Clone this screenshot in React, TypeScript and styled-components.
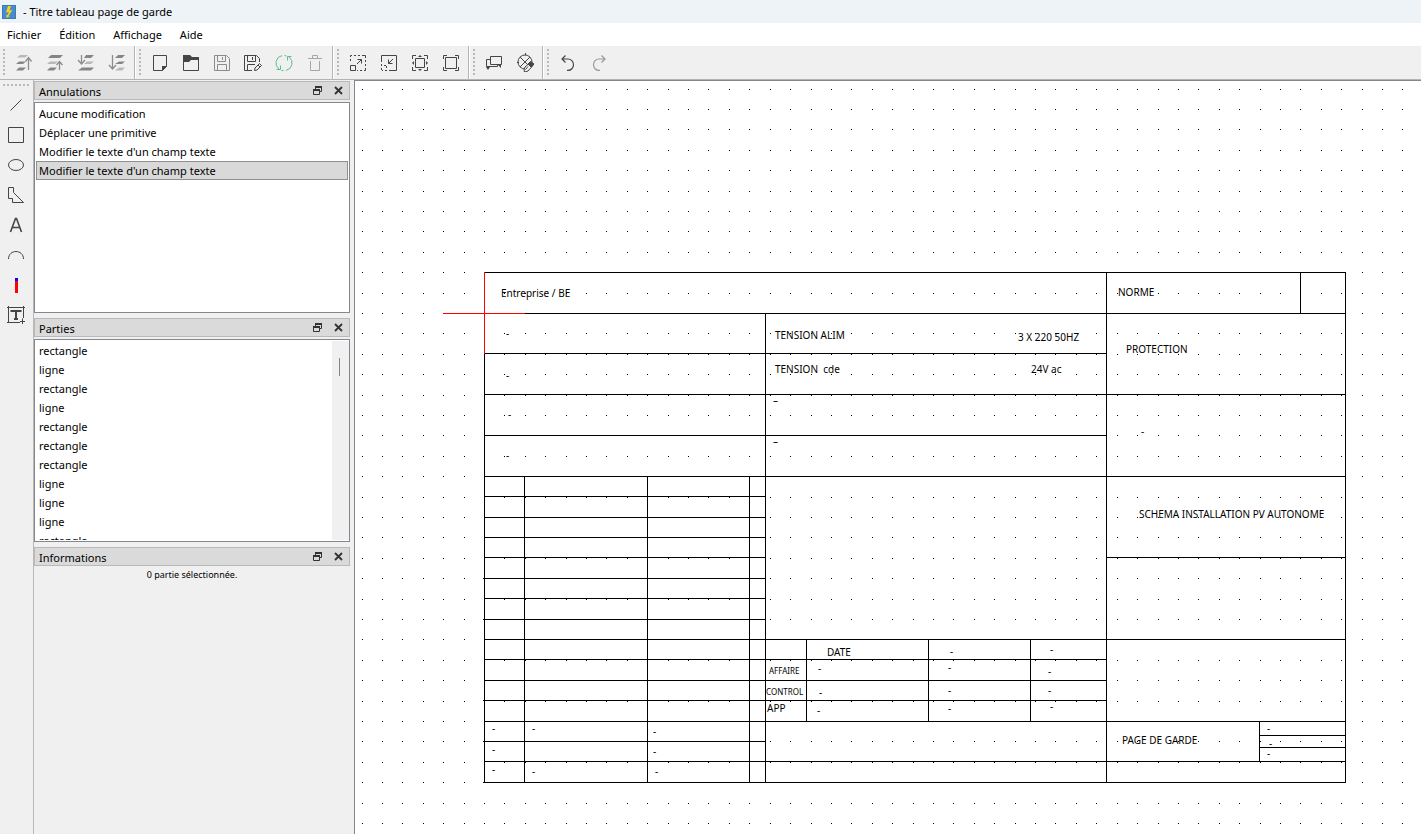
import React from 'react';
import styled, { createGlobalStyle, css } from 'styled-components';

const GlobalStyle = createGlobalStyle`
  *, *::before, *::after { box-sizing: border-box; }
  body {
    margin: 0;
    background: #f0f0f0;
    color: #000;
    font: 11px/19px "Noto Sans", "Open Sans", sans-serif;
  }
  button { font: inherit; color: inherit; }
`;

const Window = styled.div`
  display: flex;
  flex-direction: column;
  height: 100vh;
  overflow: hidden;
`;

const TitleBar = styled.header`
  display: flex;
  flex: none;
  align-items: center;
  gap: 7px;
  height: 23px;
  padding-left: 2px;
  background: #eef3f8;
`;

const WindowTitle = styled.h1`
  margin: 0;
  font-size: 11px;
  font-weight: 400;
`;

const MenuBar = styled.nav`
  display: flex;
  flex: none;
  gap: 18px;
  height: 23px;
  padding-left: 7px;
  background: #fff;
`;

const MenuButton = styled.button`
  padding: 0;
  border: 0;
  background: none;
`;

const ToolBar = styled.div`
  display: flex;
  flex: none;
  height: 34px;
  border-bottom: 1px solid #b4b4b4;
`;

const ToolGroup = styled.div<{ $last?: boolean }>`
  display: flex;
  align-items: center;
  padding-right: 2px;
  ${(p) => !p.$last && css`
    border-right: 1px solid #b4b4b4;
    margin-right: 1px;
    box-shadow: 1px 0 0 #fff;
  `}
`;

const Handle = styled.span<{ $vertical?: boolean }>`
  flex: none;
  ${(p) => p.$vertical
    ? css`
        width: 2px;
        height: 28px;
        margin: 0 3px;
        background: repeating-linear-gradient(#b9b9b9 0 2px, transparent 2px 4px);
      `
    : css`
        width: 27px;
        height: 2px;
        margin: 4px 0 4px 3px;
        background: repeating-linear-gradient(90deg, #b9b9b9 0 2px, transparent 2px 4px);
      `}
`;

const ToolButton = styled.button`
  display: flex;
  align-items: center;
  justify-content: center;
  width: 31px;
  height: 33px;
  padding: 0;
  border: 0;
  background: none;
`;

const Workspace = styled.div`
  display: flex;
  flex: 1;
  min-height: 0;
`;

const SideTools = styled.div`
  display: flex;
  flex: none;
  flex-direction: column;
  width: 34px;
  border-right: 1px solid #b8b8b8;
`;

const SideButton = styled.button`
  display: flex;
  align-items: center;
  justify-content: center;
  width: 32px;
  height: 30px;
  padding: 0;
  border: 0;
  background: none;
`;

const Docks = styled.aside`
  display: flex;
  flex: none;
  flex-direction: column;
  gap: 5px;
  width: 320px;
  padding: 1px 4px 0 0;
`;

const Dock = styled.section`
  display: flex;
  flex-direction: column;
  gap: 2px;
`;

const DockHeader = styled.div`
  display: flex;
  align-items: center;
  height: 19px;
  padding: 0 4px;
  border: 1px solid #b9b9b9;
  background: #dadada;
`;

const DockTitle = styled.h2`
  flex: 1;
  margin: 0;
  padding-top: 2px;
  font-size: 11px;
  font-weight: 400;
`;

const DockButton = styled.button`
  display: flex;
  align-items: center;
  justify-content: center;
  width: 21px;
  height: 17px;
  padding: 0;
  border: 0;
  background: none;
  &:last-child { width: 13px; margin-left: 4px; }
`;

const ListFrame = styled.div<{ $height: number }>`
  display: flex;
  height: ${(p) => p.$height}px;
  padding: 1px 0 1px 1px;
  overflow: hidden;
  border: 1px solid #828790;
  background: #fff;
`;

const List = styled.ul`
  flex: 1;
  margin: 0;
  padding: 0 1px 0 0;
  overflow: hidden;
  list-style: none;
`;

const ListItem = styled.li<{ $selected?: boolean }>`
  height: 19px;
  padding: 0 2px;
  line-height: 18px;
  border: 1px solid ${(p) => (p.$selected ? '#8f8f8f' : 'transparent')};
  background: ${(p) => (p.$selected ? '#d9d9d9' : 'none')};
`;

const ScrollTrack = styled.div`
  width: 17px;
  padding: 17px 0 0 7px;
  background: #f0f0f0;
`;

const ScrollThumb = styled.div`
  width: 1px;
  height: 18px;
  background: #858585;
`;

const InfoText = styled.p`
  margin: 0;
  font-size: 9px;
  line-height: 14px;
  text-align: center;
`;

const Canvas = styled.main`
  flex: 1;
  min-width: 0;
  overflow: hidden;
  border-top: 1px solid #828790;
  border-left: 1px solid #828790;
  background: #fff;
`;

const Drawing = styled.svg`
  display: block;
  width: 100%;
  height: 100%;
  font-family: "Noto Sans", sans-serif;
  text { white-space: pre; }
`;

const DARK = '#454545';
const MID = '#8c8c8c';

type IconProps = { size?: number; color?: string; children: React.ReactNode };

const Icon = ({ size = 19, color = DARK, children }: IconProps) => (
  <svg width={size} height={size} viewBox={`0 0 ${size} ${size}`} fill="none" stroke={color} aria-hidden="true">
    {children}
  </svg>
);

const floppy = 'M2.5 2.5H14.5L17.5 5.5V17.5H2.5Z M5.5 2.5V8.5H13.5V2.5 M10.5 4V7 M5.5 17.5V11.5H14.5V17.5';

type Tool = { label: string; icon: React.ReactNode };

const toolGroups: Tool[][] = [
  [
    {
      label: 'Amener au premier plan',
      icon: (
        <Icon color={MID}>
          <path d="M6 2H14L11 4.500H3Z" fill="#b8b8b8" stroke="none" />
          <path d="M5 8.500H12L9 11H2Z" fill="#858585" stroke="none" />
          <path d="M5 14.500H12L9 17.500H2Z" fill="#858585" stroke="none" />
          <path d="M14.500 17V5M11.500 8.500L14.500 4.500L17.500 8.500" strokeWidth="1.300" />
        </Icon>
      ),
    },
    {
      label: 'Rapprocher',
      icon: (
        <Icon color={MID}>
          <path d="M6 2H18L15 5H3Z" fill="#858585" stroke="none" />
          <path d="M5 8.500H13L10 11H2Z" fill="#b8b8b8" stroke="none" />
          <path d="M5 14.500H12L9 17.500H2Z" fill="#858585" stroke="none" />
          <path d="M14.500 17V9M11.500 12L14.500 8.500L17.500 12" strokeWidth="1.300" />
        </Icon>
      ),
    },
    {
      label: 'Éloigner',
      icon: (
        <Icon color={MID}>
          <path d="M10 2H18L15 5H8Z" fill="#858585" stroke="none" />
          <path d="M11 8.500H18L15 11H8Z" fill="#b8b8b8" stroke="none" />
          <path d="M6 14.500H18L15 17.500H2Z" fill="#858585" stroke="none" />
          <path d="M5.500 2V11M2 7L5.500 11L9 7" strokeWidth="1.300" />
        </Icon>
      ),
    },
    {
      label: 'Envoyer au fond',
      icon: (
        <Icon color={MID}>
          <path d="M11 2H18L15 5H8Z" fill="#858585" stroke="none" />
          <path d="M12 8.500H18L15 11H8Z" fill="#858585" stroke="none" />
          <path d="M12 14.500H18L15 17.500H8Z" fill="#b8b8b8" stroke="none" />
          <path d="M5.500 2V16M2 12L5.500 16L9 12" strokeWidth="1.300" />
        </Icon>
      ),
    },
  ],
  [
    {
      label: 'Nouveau',
      icon: (
        <Icon>
          <path d="M3.500 2.500H16.500V13.500L12.500 17.500H3.500Z" />
          <path d="M12 13H17L12 18Z" fill={DARK} stroke="none" />
        </Icon>
      ),
    },
    {
      label: 'Ouvrir',
      icon: (
        <Icon>
          <path d="M2 2H9L11 4H18V7H10L8 9H2Z" fill={DARK} stroke="none" />
          <path d="M2.500 5V17.500H17.500V5" />
        </Icon>
      ),
    },
    { label: 'Enregistrer', icon: <Icon color="#8c8c8c"><path d={floppy} /></Icon> },
    {
      label: 'Enregistrer sous',
      icon: (
        <Icon>
          <path d="M9 17.500H1.500V2.500H13.500L16.500 5.500V9M4.500 2.500V8.500H12.500V2.500M9.500 4V7M4.500 17.500V11.500H12" />
          <path d="M11.500 17.500L12 15L16.500 10.500L18.500 12.500L14 17L11.500 17.500ZM15 12L17 14" />
        </Icon>
      ),
    },
    {
      label: 'Recharger',
      icon: (
        <Icon color="#58c08d">
          <path d="M8 2.600A7.500 7.500 0 0 0 5 16M2.500 16.500H6.500V12.500M12 17.400A7.500 7.500 0 0 0 15 4M17.500 3.500H13.500V7.500M10.500 2.500L12.500 3M7.500 17.500L9.500 17.600" />
        </Icon>
      ),
    },
    {
      label: 'Supprimer',
      icon: (
        <Icon color="#a6a6a6">
          <path d="M3 5.500H17M7.500 5V2.500H12.500V5M5.500 8V17.500H14.500V8" />
        </Icon>
      ),
    },
  ],
  [
    {
      label: 'Zoom avant',
      icon: (
        <Icon>
          <path d="M2.500 12.500H7.500V17.500H2.500Z" />
          <path d="M2.500 8V6M2.500 4V2.500H4M6 2.500H8M10 2.500H12M14 2.500H17.500V5M17.500 7V9M17.500 11V13M17.500 15V17.500H16M14 17.500H12M10 17.500H9" />
          <path d="M9 11L13.500 6.500M9.500 6.500H13.500V10.500" />
        </Icon>
      ),
    },
    {
      label: 'Zoom arrière',
      icon: (
        <Icon>
          <path d="M2.500 9V2.500H17.500V17.500H10" />
          <path d="M2.500 11V13M2.500 15V17.500H4M6 17.500H8M7.500 15V12.500H5" strokeDasharray="2 1" />
          <path d="M14 6L9.500 10.500M9.500 6.500V10.500H13.500" />
        </Icon>
      ),
    },
    {
      label: 'Zoom adapté',
      icon: (
        <Icon>
          <path d="M5.500 5.500H14.500V14.500H5.500Z" />
          <path d="M2.500 6V2.500H6M14 2.500H17.500V6M17.500 14V17.500H14M6 17.500H2.500V14" />
          <path d="M8 4L10 2L12 4ZM8 16L10 18L12 16ZM4 8L2 10L4 12ZM16 8L18 10L16 12Z" fill={DARK} stroke="none" />
        </Icon>
      ),
    },
    {
      label: 'Zoom original',
      icon: (
        <Icon>
          <path d="M4.500 4.500H15.500V15.500H4.500Z" />
          <path d="M2.500 6V2.500H6M14 2.500H17.500V6M17.500 14V17.500H14M6 17.500H2.500V14" />
        </Icon>
      ),
    },
  ],
  [
    {
      label: 'Sélection des champs',
      icon: (
        <Icon>
          <path d="M6.500 3.500H17.500V11.500H6.500Z M6 6.500H2.500V13.500H13.500V12" />
          <path d="M14 12H17V15ZM2 14H6L4 17Z" fill={DARK} stroke="none" />
        </Icon>
      ),
    },
    {
      label: "Éditer l'élément",
      icon: (
        <Icon>
          <circle cx="10" cy="9" r="7" />
          <path d="M10.500 -1V2M5 4L14 13M15 4L5 14M2 9.500H4" />
          <path d="M9 17L10 14L14.500 10L18 12.500L13 18L9.500 19Z" fill="#f0f0f0" />
          <path d="M13 11L15.500 8.500L19 11L16 14ZM10.500 16.500L13 13.500" fill={DARK} />
        </Icon>
      ),
    },
  ],
  [
    {
      label: 'Annuler',
      icon: (
        <Icon>
          <path d="M7.500 2.500L4 6L7.500 9.500M4 6H10A5.500 5.700 0 0 1 10 17.400H9" strokeWidth="1.200" />
        </Icon>
      ),
    },
    {
      label: 'Refaire',
      icon: (
        <Icon color="#999">
          <path d="M12.500 2.500L16 6L12.500 9.500M16 6H10A5.500 5.700 0 0 0 10 17.400H11" strokeWidth="1.200" />
        </Icon>
      ),
    },
  ],
];

const sideTools: Tool[] = [
  { label: 'Ligne', icon: <Icon size={20}><path d="M4.500 15.500L15.500 4.500" /></Icon> },
  { label: 'Rectangle', icon: <Icon size={20}><path d="M2.500 2.500H17.500V17.500H2.500Z" /></Icon> },
  { label: 'Ellipse', icon: <Icon size={20}><ellipse cx="10" cy="10" rx="7.500" ry="5.500" /></Icon> },
  {
    label: 'Polygone',
    icon: <Icon size={20}><path d="M2.500 2.500H7.500V7.500L17.500 17.500H6.500V13.500H2.500Z" /></Icon>,
  },
  {
    label: 'Texte',
    icon: <Icon size={20}><path d="M4.500 17L9.500 3.500H10.500L15.500 17M6.500 12.500H13.500" strokeWidth="1.600" /></Icon>,
  },
  { label: 'Arc', icon: <Icon size={20}><path d="M2.500 14C2.500 4 17.500 4 17.500 14" /></Icon> },
  {
    label: 'Borne',
    icon: (
      <Icon size={20}>
        <path d="M9 3H12V6H9Z" fill="#00f" stroke="none" />
        <path d="M9 6H12V18H9Z" fill="#f00" stroke="none" />
      </Icon>
    ),
  },
  {
    label: 'Champ de texte',
    icon: (
      <Icon size={20}>
        <path d="M2.500 1V17.500M17.500 1V13M1 2.500H19M1 17.500H14M16.500 13.500V19M14 16.500H19" />
        <path d="M5.500 7V6H14.500V7M10 6V14M8 14H12" strokeWidth="2" />
      </Icon>
    ),
  },
];

const history = [
  'Aucune modification',
  'Déplacer une primitive',
  "Modifier le texte d'un champ texte",
  "Modifier le texte d'un champ texte",
];

const parts = [
  'rectangle', 'ligne', 'rectangle', 'ligne', 'rectangle', 'rectangle',
  'rectangle', 'ligne', 'ligne', 'ligne', 'rectangle',
];

/* Scene coordinates of the canvas' top-left corner. */
const SCENE_X = 355;
const SCENE_Y = 81;

const gridDots = (() => {
  let d = '';
  for (let j = 0; j < 70; j += 1) {
    const y = Math.floor(89.02 + j * 20.4);
    for (let i = 0; i < 110; i += 1) {
      d += `M${Math.floor(362.02 + i * 20.41)} ${y}h1v1h-1z`;
    }
  }
  return d;
})();

/* Horizontal rules: y, from x, to x. */
const rows = [
  [272, 484, 1345], [313, 484, 1345], [353, 484, 1106], [394, 484, 1345],
  [435, 484, 1106], [476, 484, 1345], [496, 484, 765], [517, 484, 765],
  [537, 484, 765], [557, 484, 765], [557, 1106, 1345], [578, 483, 765],
  [598, 484, 765], [619, 483, 765], [639, 484, 1345], [659, 484, 1106],
  [680, 484, 1106], [700, 483, 1106], [721, 484, 1345], [735, 1259, 1345],
  [741, 483, 765], [747, 1259, 1345], [761, 484, 1345], [782, 483, 1345],
];

/* Vertical rules: x, from y, to y. */
const columns = [
  [484, 272, 782], [524, 476, 782], [647, 476, 782], [749, 476, 782],
  [765, 313, 782], [806, 639, 721], [928, 639, 721], [1030, 639, 721],
  [1106, 272, 782], [1259, 721, 761], [1300, 272, 313], [1345, 272, 782],
];

const rules =
  rows.map(([y, a, b]) => `M${a} ${y}H${b + 1}v1H${a}z`).join('') +
  columns.map(([x, a, b]) => `M${x} ${a}h1V${b + 1}h-1z`).join('');

const labels: [string, number, number, number][] = [
  ['Entreprise / BE', 501, 297, 10],
  ['NORME', 1118, 296, 10],
  ['TENSION ALIM', 775, 339, 10],
  ['3 X 220 50HZ', 1018, 341, 10],
  ['TENSION  cde', 775, 373, 10],
  ['24V ac', 1031, 373, 10],
  ['PROTECTION', 1126, 353, 10],
  ['SCHEMA INSTALLATION PV AUTONOME', 1139, 518, 10],
  ['DATE', 827, 656, 10],
  ['AFFAIRE', 769, 674, 8],
  ['CONTROL', 766, 695, 8],
  ['APP', 767, 712, 10],
  ['PAGE DE GARDE', 1122, 744, 10],
  ['–', 773, 404, 10],
  ['–', 773, 445, 10],
];

/* Empty fields show a hyphen. */
const blanks = [
  [506, 334], [506, 376], [508, 415], [506, 456], [1141, 432],
  [492, 729], [492, 750], [492, 770], [532, 729], [532, 772],
  [653, 732], [653, 752], [655, 772],
  [950, 652], [1050, 650], [818, 669], [948, 668], [1048, 672],
  [819, 693], [948, 691], [1048, 691], [817, 711], [948, 709], [1050, 707],
  [1267, 729], [1269, 744], [1267, 754],
];

const DockHead = ({ title }: { title: string }) => (
  <DockHeader>
    <DockTitle>{title}</DockTitle>
    <DockButton aria-label={`Détacher ${title}`}>
      <svg width="9" height="9" viewBox="0 0 9 9" fill="none" stroke="#333" aria-hidden="true">
        <path d="M2.500 3V0.500H8.500V5.500H6.500M0.500 3.500H6.500V8.500H0.500Z" />
        <path d="M2 1H9M0 4H7" strokeWidth="2" />
      </svg>
    </DockButton>
    <DockButton aria-label={`Fermer ${title}`}>
      <svg width="9" height="9" viewBox="0 0 9 9" fill="none" stroke="#333" aria-hidden="true">
        <path d="M1 1L8 8M8 1L1 8" strokeWidth="1.800" />
      </svg>
    </DockButton>
  </DockHeader>
);

export default function App() {
  return (
    <Window>
      <GlobalStyle />
      <TitleBar>
        <svg width="14" height="14" viewBox="0 0 14 14" aria-hidden="true">
          <rect width="14" height="14" fill="#3a7bc0" />
          <rect x="1" y="1" width="12" height="12" fill="#4a8ccb" />
          <path d="M6 1H9L7.500 5.500L10.500 5L6.500 11L7.500 11.500L4.500 13L4.500 9.500L5.500 10L7 7L4 7.500Z" fill="#f8d21c" />
        </svg>
        <WindowTitle>- Titre tableau page de garde</WindowTitle>
      </TitleBar>
      <MenuBar>
        {['Fichier', 'Édition', 'Affichage', 'Aide'].map((name) => (
          <MenuButton key={name}>{name}</MenuButton>
        ))}
      </MenuBar>
      <ToolBar>
        {toolGroups.map((group, index) => (
          <ToolGroup key={group[0].label} $last={index === toolGroups.length - 1}>
            <Handle $vertical />
            {group.map((tool) => (
              <ToolButton key={tool.label} aria-label={tool.label}>{tool.icon}</ToolButton>
            ))}
          </ToolGroup>
        ))}
      </ToolBar>
      <Workspace>
        <SideTools>
          <Handle />
          {sideTools.map((tool) => (
            <SideButton key={tool.label} aria-label={tool.label}>{tool.icon}</SideButton>
          ))}
        </SideTools>
        <Docks>
          <Dock>
            <DockHead title="Annulations" />
            <ListFrame $height={211}>
              <List>
                {history.map((entry, index) => (
                  <ListItem key={index} $selected={index === history.length - 1}>{entry}</ListItem>
                ))}
              </List>
            </ListFrame>
          </Dock>
          <Dock>
            <DockHead title="Parties" />
            <ListFrame $height={203}>
              <List>
                {parts.map((part, index) => (
                  <ListItem key={index}>{part}</ListItem>
                ))}
              </List>
              <ScrollTrack>
                <ScrollThumb />
              </ScrollTrack>
            </ListFrame>
          </Dock>
          <Dock>
            <DockHead title="Informations" />
            <InfoText>0 partie sélectionnée.</InfoText>
          </Dock>
        </Docks>
        <Canvas>
          <Drawing>
            <g transform={`translate(${-SCENE_X} ${-SCENE_Y})`}>
              <path d={gridDots} shapeRendering="crispEdges" />
              <path d={rules} shapeRendering="crispEdges" />
              <path d="M443 313H525v1H443zM484 272h1V354h-1z" fill="#f00" shapeRendering="crispEdges" />
              {labels.map(([text, x, y, size]) => (
                <text key={`${x}-${y}`} x={x} y={y} fontSize={size}>{text}</text>
              ))}
              {blanks.map(([x, y]) => (
                <text key={`${x}-${y}`} x={x} y={y + 3} fontSize={10}>-</text>
              ))}
            </g>
          </Drawing>
        </Canvas>
      </Workspace>
    </Window>
  );
}
